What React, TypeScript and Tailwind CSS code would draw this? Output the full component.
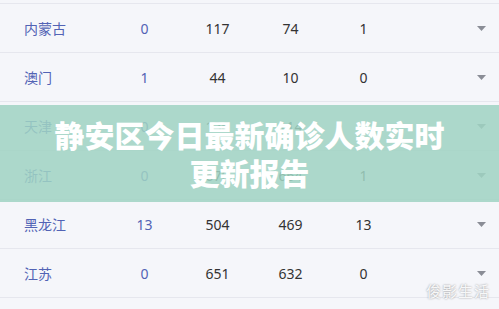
import React from "react";

const rows = [
  { name: "内蒙古", a: "0", b: "117", c: "74", d: "1" },
  { name: "澳门", a: "1", b: "44", c: "10", d: "0" },
  { name: "天津", a: "0", b: "136", c: "114", d: "1" },
  { name: "浙江", a: "0", b: "670", c: "664", d: "1" },
  { name: "黑龙江", a: "13", b: "504", c: "469", d: "13" },
  { name: "江苏", a: "0", b: "651", c: "632", d: "0" },
];

function Caret() {
  return (
    <svg width="9" height="5" viewBox="0 0 9 5" className="block">
      <path d="M0 0 L9 0 L4.5 5 Z" fill="#8a8d96" />
    </svg>
  );
}

export default function App() {
  return (
    <div
      className="relative w-[499px] h-[309px] overflow-hidden bg-[#f5f6fa]"
      style={{ fontFamily: '"Noto Sans", "Noto Sans CJK SC", sans-serif' }}
    >
      <div className="h-[3px]" />
      {rows.map((r) => (
        <div
          key={r.name}
          className="grid grid-cols-[84px_73px_73px_73px_73px_1fr] items-center h-[49px] border-t border-[#e6e7ee] pl-6 pr-[13px] text-[14px]"
        >
          <div className="text-[#5263b5]">{r.name}</div>
          <div className="text-center text-[#5263b5]">{r.a}</div>
          <div className="text-center text-[#333333]">{r.b}</div>
          <div className="text-center text-[#333333]">{r.c}</div>
          <div className="text-center text-[#333333]">{r.d}</div>
          <div className="flex justify-end">
            <Caret />
          </div>
        </div>
      ))}
      <div className="h-[49px] border-t border-[#e6e7ee]" />

      <div className="absolute left-0 right-0 top-[105px] h-[97px] bg-[rgba(159,211,195,0.86)] pt-[12px] text-center text-white text-[30px] leading-[38px] font-black">
        <div>静安区今日最新确诊人数实时</div>
        <div>更新报告</div>
      </div>

      <div
        className="absolute right-[9px] bottom-[9px] text-[15px] leading-[18px] text-white/90 tracking-[1px]"
        style={{ textShadow: "0 0 2px rgba(0,0,0,0.45)" }}
      >
        俊影生活
      </div>
    </div>
  );
}
